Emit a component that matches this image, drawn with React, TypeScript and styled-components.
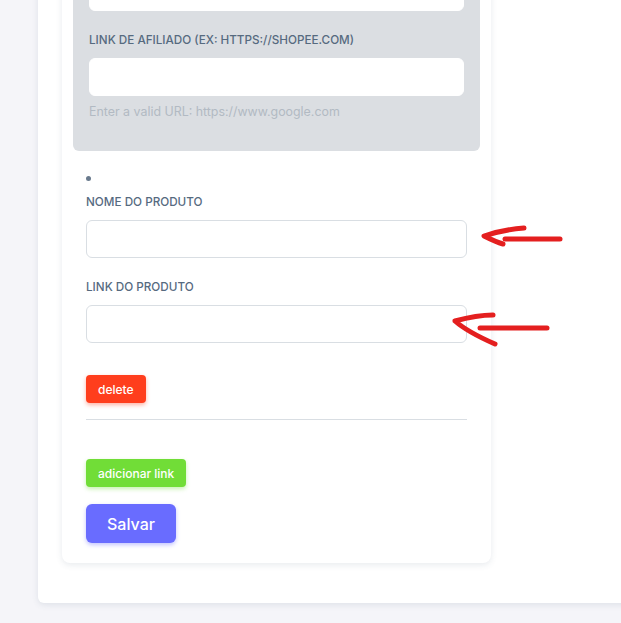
import React from 'react';
import styled, { createGlobalStyle } from 'styled-components';

const GlobalStyle = createGlobalStyle`
  html, body {
    margin: 0;
    padding: 0;
    background: #f5f5f9;
    overflow: hidden;
    font-family: Inter, 'Liberation Sans', sans-serif;
  }
`;

// The screenshot was taken scrolled down, so the top of the page sits above the window.
const Page = styled.div`
  margin-top: -78px;
  padding: 0 0 20px 38px;
`;

const Panel = styled.div`
  width: 620px;
  padding: 24px 0 40px 24px;
  background: #fff;
  border-radius: 6px 0 0 6px;
  box-shadow: 0 2px 6px 0 rgba(67, 89, 113, 0.12);
`;

const Card = styled.form`
  width: 429px;
  box-sizing: border-box;
  padding: 11px 24px 20px;
  background: #fff;
  border-radius: 8px;
  box-shadow: 0 2px 6px 0 rgba(67, 89, 113, 0.12);
  display: flex;
  flex-direction: column;
  align-items: flex-start;
`;

const AffiliateBox = styled.div`
  align-self: stretch;
  margin: 0 -13px;
  padding: 16px 16px 30px;
  background: #dbdee2;
  border-radius: 6px;
  display: flex;
  flex-direction: column;
  gap: 20px;
`;

const Field = styled.div`
  position: relative;
  align-self: stretch;
  display: flex;
  flex-direction: column;
`;

const Label = styled.label`
  font-size: 11.7px;
  font-weight: 500;
  line-height: 18px;
  text-transform: uppercase;
  color: #566a7f;
  margin-bottom: 9px;
`;

const InputWrap = styled.div`
  position: relative;
`;

const Input = styled.input<{ $flat?: boolean }>`
  box-sizing: border-box;
  display: block;
  height: 38px;
  width: 100%;
  padding: 0 14px;
  background: #fff;
  border: 1px solid ${(p) => (p.$flat ? '#fff' : '#d9dee3')};
  border-radius: 6px;
  outline: none;
`;

const Hint = styled.div`
  font-size: 12.4px;
  line-height: 19px;
  color: #b2bac3;
  margin-top: 6px;
`;

const ProductList = styled.ul`
  align-self: stretch;
  list-style: none;
  margin: 25px 0 0;
  padding: 0;
`;

const ProductItem = styled.li`
  display: flex;
  flex-direction: column;
  align-items: flex-start;
`;

const Bullet = styled.span`
  width: 5px;
  height: 5px;
  border-radius: 50%;
  background: #697a8d;
  margin-bottom: 12px;
`;

const Fields = styled.div`
  align-self: stretch;
  display: flex;
  flex-direction: column;
  gap: 20px;
  margin-bottom: 32px;
`;

const Button = styled.button<{ $color: string; $shadow: string; $big?: boolean }>`
  font-family: inherit;
  font-weight: 500;
  color: #fff;
  background: ${(p) => p.$color};
  border: none;
  border-radius: ${(p) => (p.$big ? '6px' : '4px')};
  font-size: ${(p) => (p.$big ? '16px' : '12px')};
  height: ${(p) => (p.$big ? '39px' : '28px')};
  padding: ${(p) => (p.$big ? '0 21px' : '0 12px')};
  box-shadow: 0 2px 4px 0 ${(p) => p.$shadow};
  cursor: pointer;
`;

const Divider = styled.hr`
  align-self: stretch;
  margin: 16px 0 39px;
  border: none;
  border-top: 1px solid #d9dee3;
`;

const Actions = styled.div`
  display: flex;
  flex-direction: column;
  align-items: flex-start;
  gap: 17px;
`;

const Arrow = styled.svg<{ $left: number; $top: number }>`
  position: absolute;
  left: ${(p) => p.$left}px;
  top: ${(p) => p.$top}px;
  overflow: visible;
  pointer-events: none;
`;

const RedArrowOne = () => (
  <Arrow $left={394} $top={0} width="90" height="30" viewBox="0 0 90 30">
    <g fill="none" stroke="#e41f1f" strokeWidth="5" strokeLinecap="round" strokeLinejoin="round">
      <path d="M44 8 C30 9 16 12 4 16 C10 19 16 22 23 24" />
      <path d="M25 19 L80 19" />
    </g>
  </Arrow>
);

const RedArrowTwo = () => (
  <Arrow $left={366} $top={0} width="100" height="40" viewBox="0 0 100 40">
    <g fill="none" stroke="#e41f1f" strokeWidth="5" strokeLinecap="round" strokeLinejoin="round">
      <path d="M41 10 C28 10 14 13 3 16 C12 24 27 32 43 39" />
      <path d="M28 23 L95 23" />
    </g>
  </Arrow>
);

export default function App() {
  return (
    <>
      <GlobalStyle />
      <Page>
        <Panel>
          <Card onSubmit={(e) => e.preventDefault()}>
            <AffiliateBox>
              <Field>
                <Input $flat aria-label="Nome do afiliado" />
              </Field>
              <Field>
                <Label>Link de afiliado (ex: https://shopee.com)</Label>
                <Input $flat />
                <Hint>Enter a valid URL: https://www.google.com</Hint>
              </Field>
            </AffiliateBox>

            <ProductList>
              <ProductItem>
                <Bullet />
                <Fields>
                  <Field>
                    <Label>Nome do produto</Label>
                    <InputWrap>
                      <Input />
                      <RedArrowOne />
                    </InputWrap>
                  </Field>
                  <Field>
                    <Label>Link do produto</Label>
                    <InputWrap>
                      <Input />
                      <RedArrowTwo />
                    </InputWrap>
                  </Field>
                </Fields>
                <Button type="button" $color="#ff3e1d" $shadow="rgba(255, 62, 29, 0.4)">
                  delete
                </Button>
              </ProductItem>
            </ProductList>

            <Divider />

            <Actions>
              <Button type="button" $color="#71dd37" $shadow="rgba(113, 221, 55, 0.4)">
                adicionar link
              </Button>
              <Button type="submit" $big $color="#696cff" $shadow="rgba(105, 108, 255, 0.4)">
                Salvar
              </Button>
            </Actions>
          </Card>
        </Panel>
      </Page>
    </>
  );
}
